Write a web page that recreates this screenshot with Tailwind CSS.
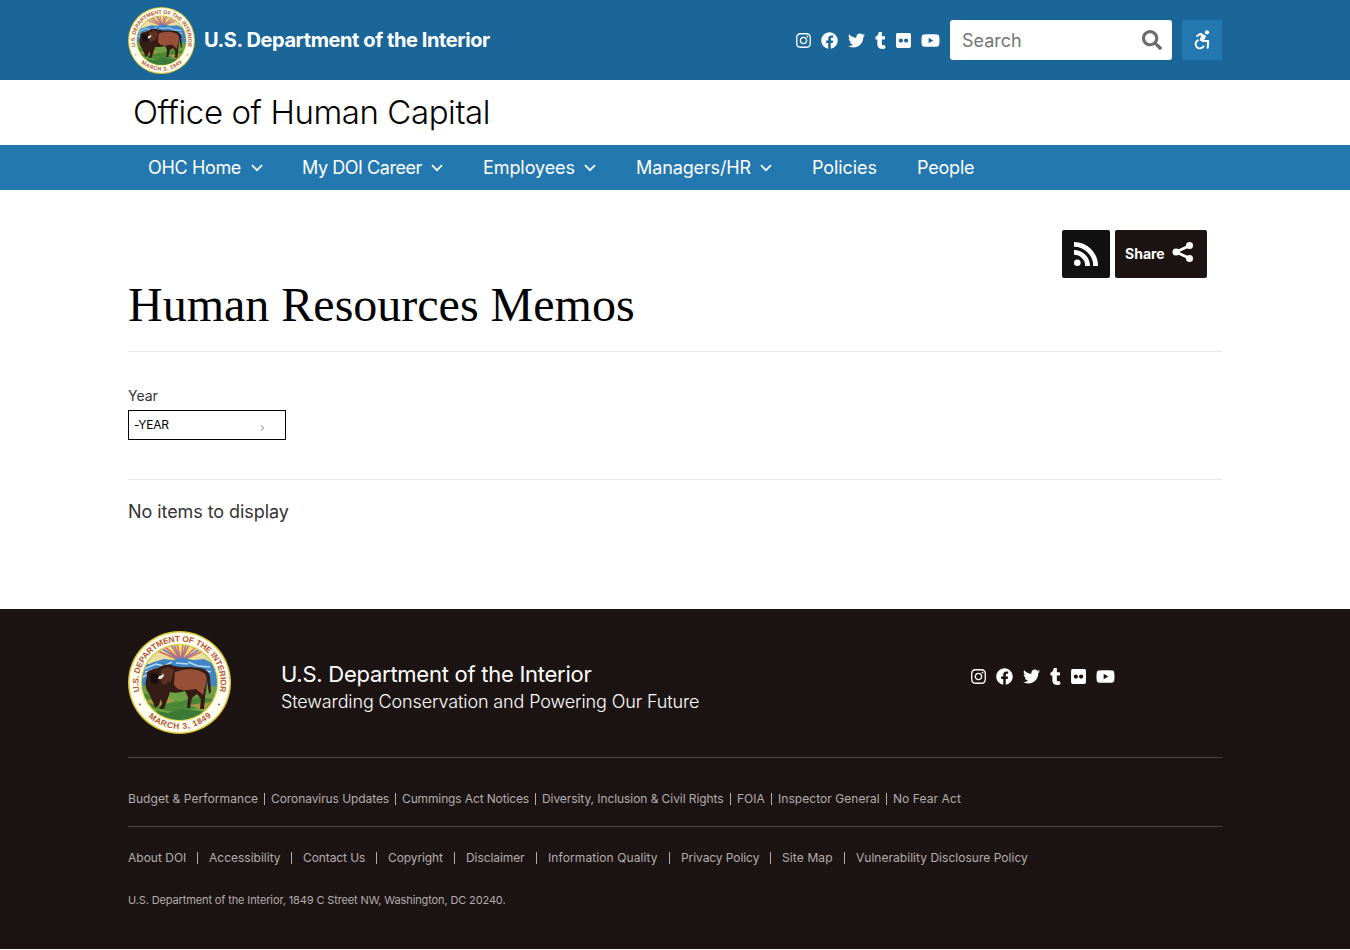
<!DOCTYPE html>
<html lang="en">
<head>
<meta charset="utf-8">
<title>Human Resources Memos</title>
<script src="https://cdn.jsdelivr.net/npm/@tailwindcss/browser@4"></script>
</head>
<body class="bg-white font-[Inter,sans-serif] text-[#333]">
<svg class="absolute h-0 w-0" xmlns="http://www.w3.org/2000/svg">
  <defs>
    <clipPath id="disc"><circle cx="51.500" cy="51.500" r="37.400"/></clipPath>
    <path id="arcTop" d="M11.550 60.700A41 41 0 1 1 91.450 60.700"/>
    <path id="arcBot" d="M12 76A46.500 46.500 0 0 0 91 76"/>
  </defs>
  <symbol id="ig" viewBox="0 0 448 512"><path d="M224.1 141c-63.6 0-114.9 51.3-114.9 114.9s51.3 114.9 114.9 114.9S339 319.5 339 255.9 287.7 141 224.1 141zm0 189.6c-41.1 0-74.7-33.5-74.7-74.7s33.5-74.7 74.7-74.7 74.7 33.5 74.7 74.7-33.6 74.7-74.7 74.7zm146.4-194.3c0 14.9-12 26.8-26.8 26.8-14.9 0-26.8-12-26.8-26.8s12-26.8 26.8-26.8 26.8 12 26.8 26.8zm76.1 27.2c-1.7-35.9-9.9-67.7-36.2-93.9-26.2-26.2-58-34.4-93.9-36.2-37-2.1-147.9-2.1-184.9 0-35.8 1.7-67.6 9.9-93.9 36.1s-34.4 58-36.2 93.9c-2.1 37-2.1 147.9 0 184.9 1.7 35.9 9.9 67.7 36.2 93.9s58 34.4 93.9 36.2c37 2.1 147.9 2.1 184.9 0 35.9-1.7 67.7-9.9 93.9-36.2 26.2-26.2 34.4-58 36.2-93.9 2.1-37 2.1-147.8 0-184.8zM398.8 388c-7.8 19.6-22.9 34.7-42.6 42.6-29.5 11.7-99.5 9-132.1 9s-102.7 2.6-132.1-9c-19.6-7.8-34.7-22.9-42.6-42.6-11.7-29.5-9-99.5-9-132.1s-2.6-102.7 9-132.1c7.8-19.6 22.9-34.7 42.6-42.6 29.5-11.7 99.5-9 132.1-9s102.7-2.6 132.1 9c19.6 7.8 34.7 22.9 42.6 42.6 11.7 29.5 9 99.5 9 132.1s2.7 102.7-9 132.1z"/></symbol>
  <symbol id="fb" viewBox="0 0 512 512"><path d="M504 256C504 119 393 8 256 8S8 119 8 256c0 123.78 90.69 226.38 209.25 245V327.69h-63V256h63v-54.64c0-62.15 37-96.48 93.67-96.48 27.14 0 55.52 4.84 55.52 4.84v61h-31.28c-30.8 0-40.41 19.12-40.41 38.73V256h68.78l-11 71.69h-57.78V501C413.31 482.38 504 379.78 504 256z"/></symbol>
  <symbol id="tw" viewBox="0 0 512 512"><path d="M459.37 151.716c.325 4.548.325 9.097.325 13.645 0 138.72-105.583 298.558-298.558 298.558-59.452 0-114.68-17.219-161.137-47.106 8.447.974 16.568 1.299 25.34 1.299 49.055 0 94.213-16.568 130.274-44.832-46.132-.975-84.792-31.188-98.112-72.772 6.498.974 12.995 1.624 19.818 1.624 9.421 0 18.843-1.3 27.614-3.573-48.081-9.747-84.143-51.98-84.143-102.985v-1.299c13.969 7.797 30.214 12.67 47.431 13.319-28.264-18.843-46.781-51.005-46.781-87.391 0-19.492 5.197-37.36 14.294-52.954 51.655 63.675 129.3 105.258 216.365 109.807-1.624-7.797-2.599-15.918-2.599-24.04 0-57.828 46.782-104.934 104.934-104.934 30.213 0 57.502 12.67 76.67 33.137 23.715-4.548 46.456-13.32 66.599-25.34-7.798 24.366-24.366 44.833-46.132 57.827 21.117-2.273 41.584-8.122 60.426-16.243-14.292 20.791-32.161 39.308-52.628 54.253z"/></symbol>
  <symbol id="tm" viewBox="0 0 320 512"><path d="M309.8 480.3c-13.6 14.5-50 31.7-97.4 31.7-120.8 0-147-88.8-147-140.6v-144H17.9c-5.5 0-10-4.5-10-10v-68c0-7.2 4.5-13.6 11.3-16 62-21.8 81.5-76 84.3-117.1.8-11 6.5-16.3 16.1-16.3h70.9c5.5 0 10 4.5 10 10v115.2h83c5.5 0 10 4.4 10 9.9v81.7c0 5.5-4.5 10-10 10h-83.4V360c0 34.2 23.7 53.6 68 35.8 4.8-1.9 9-3.2 12.7-2.2 3.5.9 5.8 3.4 7.4 7.9l22 64.3c1.8 5 3.3 10.6-.4 14.5z"/></symbol>
  <symbol id="fl" viewBox="0 0 448 512"><path d="M400 32H48C21.500 32 0 53.500 0 80v352c0 26.500 21.500 48 48 48h352c26.500 0 48-21.500 48-48V80c0-26.500-21.500-48-48-48zM144.500 319c-35.100 0-63.500-28.400-63.500-63.500s28.400-63.500 63.500-63.500 63.500 28.400 63.500 63.500-28.400 63.500-63.500 63.500zm159 0c-35.100 0-63.500-28.400-63.500-63.500s28.400-63.500 63.500-63.500 63.500 28.400 63.500 63.500-28.400 63.500-63.500 63.500z"/></symbol>
  <symbol id="yt" viewBox="0 0 576 512"><path d="M549.655 124.083c-6.281-23.65-24.787-42.276-48.284-48.597C458.781 64 288 64 288 64S117.22 64 74.629 75.486c-23.497 6.322-42.003 24.947-48.284 48.597-11.412 42.867-11.412 132.305-11.412 132.305s0 89.438 11.412 132.305c6.281 23.65 24.787 41.5 48.284 47.821C117.22 448 288 448 288 448s170.78 0 213.371-11.486c23.497-6.321 42.003-24.171 48.284-47.821 11.412-42.867 11.412-132.305 11.412-132.305s0-89.438-11.412-132.305zm-317.51 213.508V175.185l142.739 81.205-142.739 81.201z"/></symbol>
  <symbol id="chev" viewBox="0 0 12 8"><path d="M1 1.200l5 5 5-5" fill="none" stroke="currentColor" stroke-width="1.700"/></symbol>
  <symbol id="seal" viewBox="0 0 103 103">
    <circle cx="51.500" cy="51.500" r="51.500" fill="#d9c52c"/>
    <circle cx="51.500" cy="51.500" r="50" fill="#fffef2"/>
    <circle cx="51.500" cy="51.500" r="38.800" fill="#e6d53a"/>
    <g clip-path="url(#disc)">
      <rect width="103" height="103" fill="#4f93cf"/>
      <rect width="103" height="33" fill="#eadfa0"/>
      <circle cx="53" cy="27" r="13" fill="#f8e77a"/>
      <path d="M53 30L30 20M53 30L36 15M53 30L43 14M53 30L49 13M53 30L55 13M53 30L61 14M53 30L68 16M53 30L75 20" stroke="#d9705c" stroke-width="1.700"/>
      <path d="M53 30L33 17M53 30L46 14M53 30L58 14M53 30L72 18" stroke="#7b79b8" stroke-width="1.500"/>
      <path d="M12 37l14-6 10-3 9 1 9-2 12 2 10-1 16 8v25H12z" fill="#3f86c6"/>
      <path d="M16 38l12-5 8 2 8-4M48 32l12 1M60 31l10 4 12 1M65 37l18 4M15 46l10-6M17 41l14-4" stroke="#b9daf0" stroke-width="1.500" fill="none"/>
      <path d="M12 56l12-4 24 4 24-3 20 3v36H12z" fill="#6fa044"/>
      <path d="M12 62l22 3 16 6 20-5 22 3v7l-24 1-18 5-22-5-16-2z" fill="#4c8737"/>
      <path d="M16 70l20-5 12 5-18 5zM60 74l24-3-8 8z" fill="#a59b42"/>
      <path d="M24 79l16 3 14-4 26 3-10 8H36z" fill="#3b7a37"/>
    </g>
    <path d="M19 46c-1-4 1-7 4-7 4-2 7-2 9-3 5-3 10-3 14-1 9 2 18 0 26 2 7 1 10 5 10 10l1 14-2 2-2-14-1 11-1 6-1 12h-4l1-10-4-5-5 4-2 10h-3l1-11-3-6c-6 2-11 2-15 1l-2 6-4 11h-5l3-5-1-5-2 6-4 3c-1-6-4-8-5-13-4-5-6-11-3-18z" fill="#351c14"/>
    <path d="M47 41c8-3 17-4 25-1 6 2 8 7 6 12l-3 12-7-6-9 1c-6 1-11-1-13-6z" fill="#985138"/>
    <path d="M33 39c6-4 12-3 13 1l-3 10-8 4-3-7z" fill="#5e3222"/>
    <path d="M22 43c3-2 6-1 9 2l-2 8-6-1z" fill="#160f12"/>
    <path d="M31 45c2 0 4-1 4-3l1 3-3 3h-3z" fill="#f5efe6"/>
    <text font-family="Liberation Sans" font-size="8.300" font-weight="700" fill="#b4572f"><textPath href="#arcTop" textLength="147" lengthAdjust="spacing">U.S. DEPARTMENT OF THE INTERIOR</textPath></text>
    <text font-family="Liberation Sans" font-size="8.300" font-weight="700" fill="#b4572f"><textPath href="#arcBot" startOffset="13" textLength="69">MARCH 3, 1849</textPath></text>
    <circle cx="12" cy="73.500" r="1" fill="#b4572f"/><circle cx="91" cy="73.500" r="1" fill="#b4572f"/>
  </symbol>
</svg>

<header class="flex h-20 items-center bg-[#1a6699] pl-32">
  <svg class="h-[67px] w-[67px]"><use href="#seal"/></svg>
  <div class="ml-[9px] w-[592px] text-[20px] font-bold tracking-[-0.41px] whitespace-nowrap text-white">U.S. Department of the Interior</div>
  <div class="flex w-[154px] items-center gap-2.5 fill-white">
    <svg class="h-[17px] w-[15px]"><use href="#ig"/></svg>
    <svg class="h-[17px] w-[17px]"><use href="#fb"/></svg>
    <svg class="h-[17px] w-[17px]"><use href="#tw"/></svg>
    <svg class="h-[17px] w-[11px]"><use href="#tm"/></svg>
    <svg class="h-[17px] w-[15px]"><use href="#fl"/></svg>
    <svg class="h-[17px] w-[19px]"><use href="#yt"/></svg>
  </div>
  <div class="flex h-10 w-[222px] items-center justify-between rounded-[3px] bg-white pr-2.5 pl-3">
    <span class="text-[18px] text-[#757575]">Search</span>
    <svg class="h-5 w-5 fill-[#6b6b6b]" viewBox="0 0 512 512"><path d="M505 442.700L405.300 343c-4.500-4.500-10.600-7-17-7H372c27.600-35.300 44-79.700 44-128C416 93.100 322.900 0 208 0S0 93.100 0 208s93.100 208 208 208c48.300 0 92.700-16.400 128-44v16.300c0 6.400 2.500 12.500 7 17l99.700 99.700c9.400 9.400 24.600 9.400 33.900 0l28.300-28.300c9.400-9.400 9.400-24.600.1-34zM208 336c-70.700 0-128-57.200-128-128 0-70.700 57.200-128 128-128 70.700 0 128 57.200 128 128 0 70.700-57.200 128-128 128z"/></svg>
  </div>
  <div class="ml-2.5 flex h-10 w-10 items-center justify-center rounded-[2px] bg-[#2378b0]">
    <svg class="h-5 w-4" viewBox="0 0 16 20" fill="none" stroke="#fff" stroke-width="2"><circle cx="13" cy="2.300" r="2.100" fill="#fff" stroke="none"/><path d="M3 6l3.300-2.200 4.700 2.500-2.600 4.600h5.800l-.5 6.800" stroke-linejoin="round" stroke-linecap="round"/><path d="M4.500 10a4.300 4.300 0 1 0 5.400 5.600" stroke-width="1.900"/><path d="M7.400 4.300l4.300 2-3 5.200-3-1z" fill="#fff" stroke="none"/></svg>
  </div>
</header>

<div class="h-[65px] pt-2 pl-[133px] text-[33px] leading-[48px] font-light tracking-[-0.42px] text-black">Office of Human Capital</div>

<nav class="flex h-[45px] items-center bg-[#2378b0] pl-[148px] text-[18px] tracking-[-0.2px] whitespace-nowrap text-white">
  <div class="flex w-[154px] items-center"><span class="w-[103px] tracking-[-0.35px]">OHC Home</span><svg class="h-2 w-3"><use href="#chev"/></svg></div>
  <div class="flex w-[181px] items-center"><span class="w-[129px] tracking-[-0.45px]">My DOI Career</span><svg class="h-2 w-3"><use href="#chev"/></svg></div>
  <div class="flex w-[153px] items-center"><span class="w-[101px] tracking-[-0.08px]">Employees</span><svg class="h-2 w-3"><use href="#chev"/></svg></div>
  <div class="flex w-[176px] items-center"><span class="w-[124px] tracking-[-0.12px]">Managers/HR</span><svg class="h-2 w-3"><use href="#chev"/></svg></div>
  <div class="w-[105px] tracking-[-0.08px]">Policies</div>
  <div>People</div>
</nav>

<main class="ml-32 h-[419px] w-[1094px] pt-10">
  <div class="flex justify-end gap-[5px] pr-[15px]">
    <div class="flex h-12 w-12 items-center justify-center rounded-[2px] bg-[#111]">
      <svg class="h-6 w-6" viewBox="0 0 24 24" fill="none" stroke="#fff" stroke-width="4.800"><circle cx="3.300" cy="20.700" r="3.300" fill="#fff" stroke="none"/><path d="M0 2.400A21.600 21.600 0 0 1 21.600 24M0 10.400A13.600 13.600 0 0 1 13.600 24"/></svg>
    </div>
    <div class="flex h-12 w-[92px] items-center rounded-[2px] bg-[#1c1313] pl-2.5 text-white">
      <span class="-mt-px w-[47px] text-[14px] font-bold">Share</span>
      <svg class="-mt-1 h-[22px] w-[22px]" viewBox="0 0 22 22" fill="#fff"><path d="M18 4.500L4 11l14 6.500" fill="none" stroke="#fff" stroke-width="2.800"/><circle cx="17.500" cy="4.500" r="3.500"/><circle cx="4" cy="11" r="3.500"/><circle cx="17.500" cy="17.500" r="3.500"/></svg>
    </div>
  </div>
  <h1 class="h-[74px] border-b border-[#e6e6e6] font-['Liberation_Serif',serif] text-[48px] leading-[54px] text-black">Human Resources Memos</h1>
  <div class="h-32 border-b border-[#e6e6e6] pt-[34px]">
    <div class="text-[14px] leading-[20px]">Year</div>
    <div class="mt-1 flex h-[30px] w-[158px] items-center justify-between border border-black bg-white pr-5 pl-[5px] text-[12px] text-black"><span class="tracking-[-0.25px]">-YEAR</span><svg class="mt-1.5 h-1.5 w-[5px]" viewBox="0 0 5 6" fill="none" stroke="#888"><path d="M1 .5L3.800 3 1 5.500"/></svg></div>
  </div>
  <p class="pt-[19px] text-[18px] leading-[26px] tracking-[-0.07px]">No items to display</p>
</main>

<footer class="h-[340px] bg-[#1c1413] pl-32 text-[#b3adac]">
  <div class="flex h-[149px] w-[1094px] border-b border-[#4b4443] pt-[22px] text-white">
    <svg class="h-[103px] w-[103px]"><use href="#seal"/></svg>
    <div class="ml-[50px] w-[690px] pt-[29px] whitespace-nowrap">
      <div class="text-[22px] leading-[28px] tracking-[-0.26px]">U.S. Department of the Interior</div>
      <div class="text-[18px] leading-[28px] font-light tracking-[-0.13px]">Stewarding Conservation and Powering Our Future</div>
    </div>
    <div class="mt-[37px] flex h-[17px] items-center gap-2.5 fill-white">
      <svg class="h-[17px] w-[15px]"><use href="#ig"/></svg>
      <svg class="h-[17px] w-[17px]"><use href="#fb"/></svg>
      <svg class="h-[17px] w-[17px]"><use href="#tw"/></svg>
      <svg class="h-[17px] w-[11px]"><use href="#tm"/></svg>
      <svg class="h-[17px] w-[15px]"><use href="#fl"/></svg>
      <svg class="h-[17px] w-[19px]"><use href="#yt"/></svg>
    </div>
  </div>
  <div class="flex h-[69px] w-[1094px] items-center border-b border-[#4b4443] pt-[14px] text-[12px] leading-[12px] whitespace-nowrap">
    <span class="w-[137px] border-r border-[#b3adac] tracking-[0.08px]">Budget &amp; Performance</span>
    <span class="w-[131px] border-r border-[#b3adac] pl-1.5 tracking-[-0.08px]">Coronavirus Updates</span>
    <span class="w-[140px] border-r border-[#b3adac] pl-1.5 tracking-[-0.13px]">Cummings Act Notices</span>
    <span class="w-[195px] border-r border-[#b3adac] pl-1.5 tracking-[-0.07px]">Diversity, Inclusion &amp; Civil Rights</span>
    <span class="w-[41px] border-r border-[#b3adac] pl-1.5">FOIA</span>
    <span class="w-[115px] border-r border-[#b3adac] pl-1.5 tracking-[0.05px]">Inspector General</span>
    <span class="pl-1.5 tracking-[0.08px]">No Fear Act</span>
  </div>
  <div class="flex pt-[25px] text-[12px] leading-[12px] whitespace-nowrap">
    <span class="w-[70px] border-r border-[#b3adac]">About DOI</span>
    <span class="w-[94px] border-r border-[#b3adac] pl-[11px]">Accessibility</span>
    <span class="w-[85px] border-r border-[#b3adac] pl-[11px] tracking-[-0.1px]">Contact Us</span>
    <span class="w-[78px] border-r border-[#b3adac] pl-[11px] tracking-[-0.1px]">Copyright</span>
    <span class="w-[82px] border-r border-[#b3adac] pl-[11px] tracking-[-0.08px]">Disclaimer</span>
    <span class="w-[133px] border-r border-[#b3adac] pl-[11px] tracking-[0.1px]">Information Quality</span>
    <span class="w-[101px] border-r border-[#b3adac] pl-[11px] tracking-[-0.08px]">Privacy Policy</span>
    <span class="w-[74px] border-r border-[#b3adac] pl-[11px] tracking-[0.12px]">Site Map</span>
    <span class="pl-[11px] tracking-[0.03px]">Vulnerability Disclosure Policy</span>
  </div>
  <p class="pt-[29px] text-[11px] leading-[14px] tracking-[-0.125px]">U.S. Department of the Interior, 1849 C Street NW, Washington, DC 20240.</p>
</footer>
</body>
</html>
